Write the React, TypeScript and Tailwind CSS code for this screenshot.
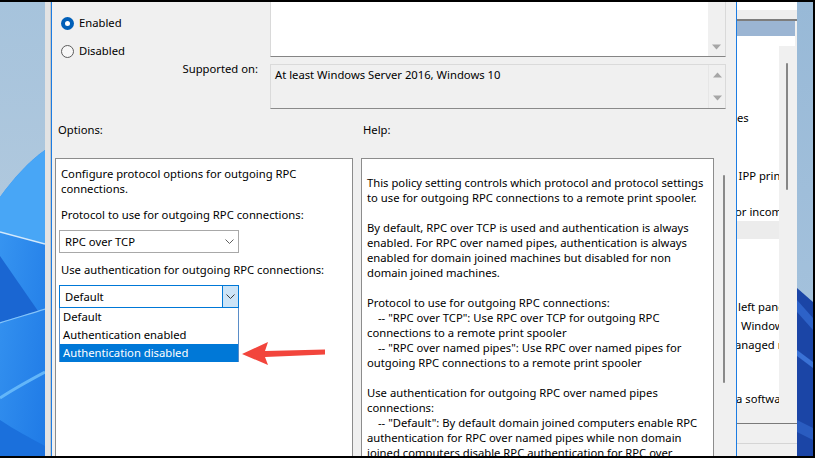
import React from 'react';

const HELP_LINES: string[] = [
  'This policy setting controls which protocol and protocol settings',
  'to use for outgoing RPC connections to a remote print spooler.',
  '',
  'By default, RPC over TCP is used and authentication is always',
  'enabled. For RPC over named pipes, authentication is always',
  'enabled for domain joined machines but disabled for non',
  'domain joined machines.',
  '',
  'Protocol to use for outgoing RPC connections:',
  '\t-- "RPC over TCP": Use RPC over TCP for outgoing RPC',
  'connections to a remote print spooler',
  '\t-- "RPC over named pipes": Use RPC over named pipes for',
  'outgoing RPC connections to a remote print spooler',
  '',
  'Use authentication for outgoing RPC over named pipes',
  'connections:',
  '\t-- "Default": By default domain joined computers enable RPC',
  'authentication for RPC over named pipes while non domain',
  'joined computers disable RPC authentication for RPC over',
  'named pipes.',
];

const AUTH_OPTIONS = ['Default', 'Authentication enabled', 'Authentication disabled'];

const Chevron = ({ color = '#5f5f5f' }: { color?: string }) => (
  <svg width="9" height="5" viewBox="0 0 9 5">
    <path d="M0.5 0.5 L4.5 4.5 L8.5 0.5" fill="none" stroke={color} strokeWidth="1" />
  </svg>
);

const ScrollArrow = ({ up }: { up?: boolean }) => (
  <svg width="9" height="6" viewBox="0 0 9 6">
    <path d={up ? 'M0 5.5 H9 L4.5 0.5 Z' : 'M0 0.5 H9 L4.5 5.5 Z'} fill="#a6a6a6" />
  </svg>
);

const Radio = ({ checked, label }: { checked?: boolean; label: string }) => (
  <div className="h-[28px] shrink-0 flex items-center pl-[9px] gap-[5px]">
    {checked ? (
      <div className="w-[13px] h-[13px] rounded-full bg-[#005fb8] flex items-center justify-center">
        <div className="w-[5px] h-[5px] rounded-full bg-white" />
      </div>
    ) : (
      <div className="w-[13px] h-[13px] rounded-full border border-[#5c5c5c] bg-[#f7f7f7]" />
    )}
    <span className="leading-[16px]">{label}</span>
  </div>
);

const LeftWallpaper = () => (
  <svg width="45" height="454" viewBox="0 2 45 454" className="shrink-0 block">
    <defs>
      <linearGradient id="lwTop" x1="0" y1="0" x2="0" y2="1">
        <stop offset="0" stopColor="#a6c3dc" />
        <stop offset="1" stopColor="#bccfe0" />
      </linearGradient>
      <linearGradient id="lwBlue" x1="0" y1="0" x2="1" y2="1">
        <stop offset="0" stopColor="#3a98f2" />
        <stop offset="1" stopColor="#1f7ae6" />
      </linearGradient>
    </defs>
    <rect x="0" y="2" width="45" height="454" fill="url(#lwTop)" />
    <path d="M45 150 C30 160 12 180 0 197 L0 456 L45 456 Z" fill="url(#lwBlue)" />
    <path d="M45 150 C30 160 12 180 0 197 L0 232 C15 236 30 240 45 244 Z" fill="#48a6f6" />
    <path d="M0 232 C15 236 30 240 45 244" fill="none" stroke="#d3e9fc" strokeWidth="1.5" />
    <path d="M0 256 L38 311 L0 322 Z" fill="#1a66d2" />
    <path d="M0 323 C15 318 30 314 45 309" fill="none" stroke="#86c4f9" strokeWidth="1.2" />
    <path d="M0 398 C15 388 30 380 45 372" fill="none" stroke="#63b6f9" strokeWidth="3" />
    <path d="M0 420 C15 430 30 438 45 446 L45 456 L0 456 Z" fill="#1b70dc" />
  </svg>
);

const RightWallpaper = () => (
  <svg width="16" height="454" viewBox="0 2 16 454" className="shrink-0 block">
    <defs>
      <linearGradient id="rwTop" x1="0" y1="0" x2="0" y2="1">
        <stop offset="0" stopColor="#98b9d7" />
        <stop offset="1" stopColor="#a9c5de" />
      </linearGradient>
    </defs>
    <rect x="0" y="2" width="16" height="454" fill="url(#rwTop)" />
    <path d="M0 288 L16 302 L16 456 L0 456 Z" fill="#1b45a6" />
    <path d="M0 300 L16 318 L16 330 L0 312 Z" fill="#2d62c8" />
    <path d="M0 350 L16 362 L16 368 L0 356 Z" fill="#3a72d6" />
    <path d="M0 420 L16 428 L16 440 L0 432 Z" fill="#2a5cc0" />
  </svg>
);

const BackgroundWindow = () => (
  <div className="w-[60px] shrink-0 flex flex-col bg-[#f0f0f0] overflow-hidden">
    <div className="h-[8px] shrink-0 bg-white" />
    <div className="h-[9px] shrink-0 bg-[#eeeeee]" />
    <div className="h-[2px] shrink-0 bg-[#7d7d7d]" />
    <div className="h-[15px] shrink-0 bg-[#9bb5d3] mr-[2px]" />
    <div className="h-[10px] shrink-0 bg-white mr-[2px]" />
    <div className="h-[357px] shrink-0 flex mr-[2px]">
      <div className="w-[42px] bg-white overflow-hidden flex flex-col whitespace-nowrap leading-[15px]">
        <div className="h-[64px] shrink-0" />
        <div className="h-[15px] shrink-0">es</div>
        <div className="h-[43px] shrink-0" />
        <div className="h-[15px] shrink-0 -ml-[6px]">r IPP printing</div>
        <div className="h-[21px] shrink-0" />
        <div className="h-[15px] shrink-0 -ml-[2px]">or incoming</div>
        <div className="h-[2px] shrink-0" />
        <div className="h-[18px] shrink-0 bg-[#ececec]" />
        <div className="h-[60px] shrink-0" />
        <div className="h-[15px] shrink-0 ml-[1px]">left pane</div>
        <div className="h-[4px] shrink-0" />
        <div className="h-[15px] shrink-0 ml-[4px]">Windows</div>
        <div className="h-[4px] shrink-0" />
        <div className="h-[15px] shrink-0 -ml-[2px]">anaged r</div>
        <div className="h-[39px] shrink-0" />
        <div className="h-[15px] shrink-0 -ml-[1px]">a software</div>
      </div>
      <div className="w-[16px] bg-[#f0f0f0] flex justify-center pt-[17px]">
        <div className="w-[2px] h-[127px] rounded-full bg-[#878787]" />
      </div>
    </div>
    <div className="h-[20px] shrink-0" />
    <div className="h-[1px] shrink-0 bg-[#7a7a7a]" />
    <div className="h-[19px] shrink-0" />
    <div className="h-[1px] shrink-0 bg-[#d5d5d5]" />
  </div>
);

export default function App() {
  return (
    <div className="w-[815px] h-[458px] overflow-hidden flex border-t-2 border-r-2 border-b-2 border-black font-['Noto_Sans',sans-serif] text-[11.25px] text-black bg-[#f0f0f0]">
      <LeftWallpaper />
      <div className="w-[6px] shrink-0 bg-[#e3e3e3] border-r border-[#c6c6c6]" />

      {/* Policy dialog */}
      <div className="w-[686px] shrink-0 flex flex-col bg-[#f0f0f0] border-l border-r border-[#1c7ce2] overflow-hidden">
        {/* Radios + comment */}
        <div className="h-[55px] shrink-0 flex">
          <div className="w-[218px] shrink-0 flex flex-col -mt-[21px]">
            <Radio label="Not Configured" />
            <Radio checked label="Enabled" />
            <Radio label="Disabled" />
          </div>
          <div className="w-[456px] shrink-0 flex bg-white border-l border-r border-b border-[#d9d9d9] border-b-[#858585]">
            <div className="flex-1" />
            <div className="w-[17px] bg-[#f0f0f0] flex flex-col items-center justify-end pb-[6px]">
              <ScrollArrow />
            </div>
          </div>
        </div>

        {/* Supported on */}
        <div className="h-[55px] shrink-0 flex">
          <div className="w-[218px] shrink-0 text-right pr-[12px] mt-[4px] leading-[16px]">Supported on:</div>
          <div className="w-[456px] shrink-0 h-[45px] mt-[7px] flex border border-[#dadada] border-b-[#8a8a8a] bg-[#f0f0f0]">
            <div className="flex-1 pl-[4px] pt-[2px] leading-[16px]">At least Windows Server 2016, Windows 10</div>
            <div className="w-[17px] border-l border-[#e6e6e6] flex flex-col items-center justify-between pt-[7px] pb-[7px]">
              <ScrollArrow up />
              <ScrollArrow />
            </div>
          </div>
        </div>

        {/* Section labels */}
        <div className="h-[46px] shrink-0 flex pt-[10px] leading-[16px]">
          <div className="w-[311px] pl-[6px]">Options:</div>
          <div>Help:</div>
        </div>

        {/* Options and Help panes */}
        <div className="flex-1 flex pl-[3px]">
          <div className="w-[298px] h-[320px] shrink-0 bg-white border border-[#8c8c8c] pt-[7px] leading-[15px]">
            <div className="pl-[5px]">
              <div>Configure protocol options for outgoing RPC</div>
              <div>connections.</div>
              <div className="mt-[11px]">Protocol to use for outgoing RPC connections:</div>
            </div>
            <div className="ml-[3px] mt-[8px] w-[180px] h-[23px] flex items-center justify-between border border-[#a8a8a8] bg-white pl-[5px] pr-[4px]">
              <span>RPC over TCP</span>
              <Chevron />
            </div>
            <div className="pl-[5px] mt-[9px]">Use authentication for outgoing RPC connections:</div>
            <div className="relative ml-[3px] mt-[8px] w-[180px]">
              <div className="h-[23px] flex items-center border border-[#0078d7] bg-white">
                <span className="flex-1 pl-[5px]">Default</span>
                <div className="w-[16px] h-full flex items-center justify-center bg-[#cce4f7] border-l border-[#0078d7]">
                  <Chevron color="#3c3c3c" />
                </div>
              </div>
              <div className="absolute left-0 top-full w-[180px] bg-white border-l border-r border-[#5a8dc8]">
                {AUTH_OPTIONS.map((opt, i) => (
                  <div
                    key={opt}
                    className={`h-[18px] leading-[18px] pl-[3px] ${
                      i === 2 ? 'bg-[#0078d7] text-white' : ''
                    }`}
                  >
                    {opt}
                  </div>
                ))}
              </div>
              {/* annotation arrow */}
              <svg
                width="87"
                height="27"
                viewBox="0 0 87 27"
                className="absolute left-[181px] top-[55px]"
              >
                <path d="M2 14 L28 2 L25 11 L85 9.5 L85 14.5 L25 17 L28 25 Z" fill="#f2453c" />
              </svg>
            </div>
          </div>

          <div className="ml-[8px] w-[353px] h-[320px] shrink-0 bg-white border border-[#8c8c8c] pl-[5px] pt-[16px] leading-[15px] whitespace-pre">
            {HELP_LINES.map((line, i) =>
              line === '' ? (
                <div key={i} className="h-[15px]" />
              ) : line.startsWith('\t') ? (
                <div key={i} className="pl-[11px]">{line.slice(1)}</div>
              ) : (
                <div key={i}>{line}</div>
              )
            )}
          </div>
          <div className="w-[18px] shrink-0 flex justify-center pt-[17px] pl-[1px]">
            <div className="w-[2px] h-[208px] rounded-full bg-[#898989]" />
          </div>
        </div>
      </div>

      <BackgroundWindow />
      <RightWallpaper />
    </div>
  );
}
